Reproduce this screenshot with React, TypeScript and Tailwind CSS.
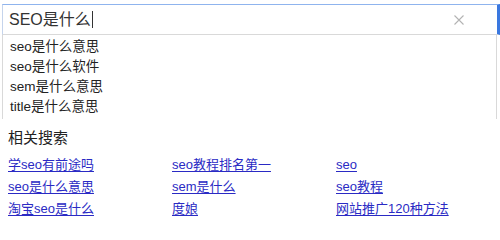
import React from "react";

const suggestions = ["seo是什么意思", "seo是什么软件", "sem是什么意思", "title是什么意思"];
const links = [
  ["学seo有前途吗", "seo教程排名第一", "seo"],
  ["seo是什么意思", "sem是什么", "seo教程"],
  ["淘宝seo是什么", "度娘", "网站推广120种方法"],
];

export default function App() {
  return (
    <div
      className="w-[500px] h-[220px] bg-white overflow-hidden"
      style={{ fontFamily: '"Liberation Sans", Arial, "Noto Sans CJK SC", sans-serif' }}
    >
      <div className="pt-[4px] pl-[2px]">
        <div className="relative flex items-center h-[31px] border-t border-t-[#8fb4ee] border-l border-l-[#c5d4ec] border-b border-b-[#d9d9d9] border-r-[3px] border-r-[#3a78e0]">
          <span className="pl-[6px] text-[16px] text-[#333] leading-none flex items-center">
            SEO是什么
            <span className="inline-block w-px h-[17px] bg-[#333] ml-[1px]" />
          </span>
          <svg
            className="absolute right-[33px] top-[10px]"
            width="10"
            height="10"
            viewBox="0 0 10 10"
          >
            <path d="M0.5 0.5L9.5 9.5M9.5 0.5L0.5 9.5" stroke="#b3b3b3" strokeWidth="1.1" fill="none" />
          </svg>
        </div>
        <div className="w-[495px] border-l border-r border-[#d9d9d9] pt-[2px] pb-[2px]">
          {suggestions.map((s) => (
            <div key={s} className="h-[20px] pl-[7px] flex items-center text-[13.5px] text-[#222]">
              {s}
            </div>
          ))}
        </div>
      </div>
      <div className="pl-[8px] pt-[9px]">
        <div className="text-[15px] text-[#222] leading-[20px]">相关搜索</div>
        <div className="mt-[6px] flex flex-col">
          {links.map((row, i) => (
            <div key={i} className="flex h-[22px] items-center">
              {row.map((l, j) => (
                <a
                  key={j}
                  href="#"
                  className="w-[166px] text-[13px] text-[#2a2ac4] underline underline-offset-2"
                >
                  {l}
                </a>
              ))}
            </div>
          ))}
        </div>
      </div>
    </div>
  );
}
